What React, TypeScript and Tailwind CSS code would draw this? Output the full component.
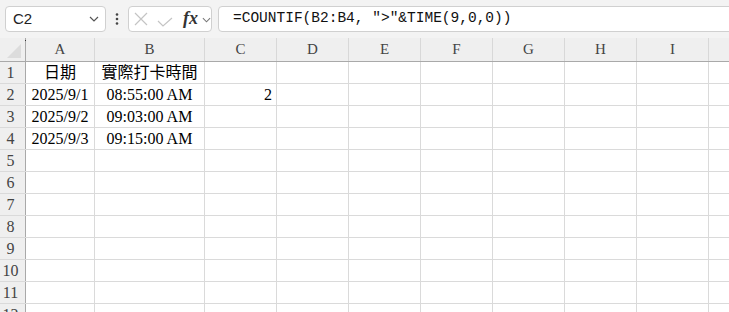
import React from 'react';

const COLS = [
  { key: 'A', w: 'w-[69px]' },
  { key: 'B', w: 'w-[110px]' },
  { key: 'C', w: 'w-[72px]' },
  { key: 'D', w: 'w-[72px]' },
  { key: 'E', w: 'w-[72px]' },
  { key: 'F', w: 'w-[72px]' },
  { key: 'G', w: 'w-[72px]' },
  { key: 'H', w: 'w-[72px]' },
  { key: 'I', w: 'w-[72px]' },
  { key: '', w: 'w-[72px]' },
];

type Cell = { text: string; align: 'center' | 'right' };

const DATA: Record<number, Record<string, Cell>> = {
  1: { A: { text: '日期', align: 'center' }, B: { text: '實際打卡時間', align: 'center' } },
  2: {
    A: { text: '2025/9/1', align: 'center' },
    B: { text: '08:55:00 AM', align: 'center' },
    C: { text: '2', align: 'right' },
  },
  3: { A: { text: '2025/9/2', align: 'center' }, B: { text: '09:03:00 AM', align: 'center' } },
  4: { A: { text: '2025/9/3', align: 'center' }, B: { text: '09:15:00 AM', align: 'center' } },
};

const serif = "font-['Liberation_Serif','Noto_Sans_CJK_TC',serif]";

function Chevron() {
  return (
    <svg width="10" height="6" viewBox="0 0 10 6" fill="none">
      <path d="M1 1l4 4 4-4" stroke="#555" strokeWidth="1.2" />
    </svg>
  );
}

export default function App() {
  const rows = Array.from({ length: 12 }, (_, i) => i + 1);

  return (
    <div className="w-[729px] h-[312px] overflow-hidden bg-white">
      {/* Toolbar */}
      <div className="h-[38px] bg-[#f3f3f3] flex items-start pt-[6px] pl-[5px] overflow-hidden">
        <div className="w-[101px] shrink-0 h-[26px] bg-white border border-[#d0d0d0] rounded-[4px] flex items-center justify-between pl-[7px] pr-[6px]">
          <span className="font-['Liberation_Sans',sans-serif] text-[15px] text-[#222]">C2</span>
          <Chevron />
        </div>
        <div className="w-[22px] shrink-0 h-[26px] flex items-center justify-center">
          <svg width="4" height="14" viewBox="0 0 4 14">
            <circle cx="2" cy="2.5" r="1.3" fill="#444" />
            <circle cx="2" cy="7" r="1.3" fill="#444" />
            <circle cx="2" cy="11.5" r="1.3" fill="#444" />
          </svg>
        </div>
        <div className="w-[84px] shrink-0 h-[26px] bg-white border border-[#d0d0d0] rounded-[4px] flex items-center pl-[4px]">
          <svg width="14" height="14" viewBox="0 0 14 14" className="ml-[1px]">
            <path d="M1 1l12 12M13 1L1 13" stroke="#c4c4c4" strokeWidth="1.2" />
          </svg>
          <svg width="16" height="10" viewBox="0 0 16 10" className="ml-[9px] mt-[5px]">
            <path d="M1 4l5 5L15 1" stroke="#c4c4c4" strokeWidth="1.2" fill="none" />
          </svg>
          <span className={`${serif} italic font-bold text-[18px] text-[#333] ml-[10px] leading-none -mt-[2px]`}>fx</span>
          <span className="ml-[4px] mt-[2px]">
            <svg width="9" height="6" viewBox="0 0 10 6" fill="none">
              <path d="M1 1l4 4 4-4" stroke="#777" strokeWidth="1.2" />
            </svg>
          </span>
        </div>
        <div className="ml-[6px] w-[530px] shrink-0 h-[26px] bg-white border border-[#d0d0d0] rounded-[4px] flex items-center pl-[14px]">
          <span className="font-['Liberation_Mono',monospace] text-[14.5px] text-[#111] whitespace-pre">
            =COUNTIF(B2:B4, "&gt;"&amp;TIME(9,0,0))
          </span>
        </div>
      </div>

      {/* Column headers */}
      <div className="flex h-[24px] bg-[#efefef] border-b border-[#a9a9a9] overflow-hidden">
        <div className="relative w-[26px] shrink-0 border-r border-[#a9a9a9]">
          <div className="absolute right-[4px] bottom-[3px] w-0 h-0 border-l-[14px] border-l-transparent border-b-[14px] border-b-[#dcdcdc]" />
          <div className="absolute right-[-1px] top-[2px] w-[1px] h-[1px] bg-[#333]" />
        </div>
        {COLS.map((c, i) => (
          <div
            key={i}
            className={`${c.w} shrink-0 border-r border-[#d8d8d8] flex items-end justify-center pb-[1px] ${serif} text-[15px] text-[#444]`}
          >
            {c.key}
          </div>
        ))}
      </div>

      {/* Rows */}
      {rows.map((r) => (
        <div key={r} className="flex h-[22px] border-b border-[#dadada] overflow-hidden">
          <div
            className={`w-[26px] shrink-0 bg-[#efefef] border-r border-[#a9a9a9] flex items-center justify-center pr-[4px] ${serif} text-[16px] text-[#444]`}
          >
            {r}
          </div>
          {COLS.map((c, i) => {
            const cell = DATA[r]?.[c.key];
            return (
              <div
                key={i}
                className={`${c.w} shrink-0 border-r border-[#dadada] flex items-center pt-[1px] ${serif} text-[16px] text-black whitespace-nowrap ${
                  cell?.align === 'right' ? 'justify-end pr-[4px]' : 'justify-center'
                }`}
              >
                {cell?.text}
              </div>
            );
          })}
        </div>
      ))}
    </div>
  );
}
